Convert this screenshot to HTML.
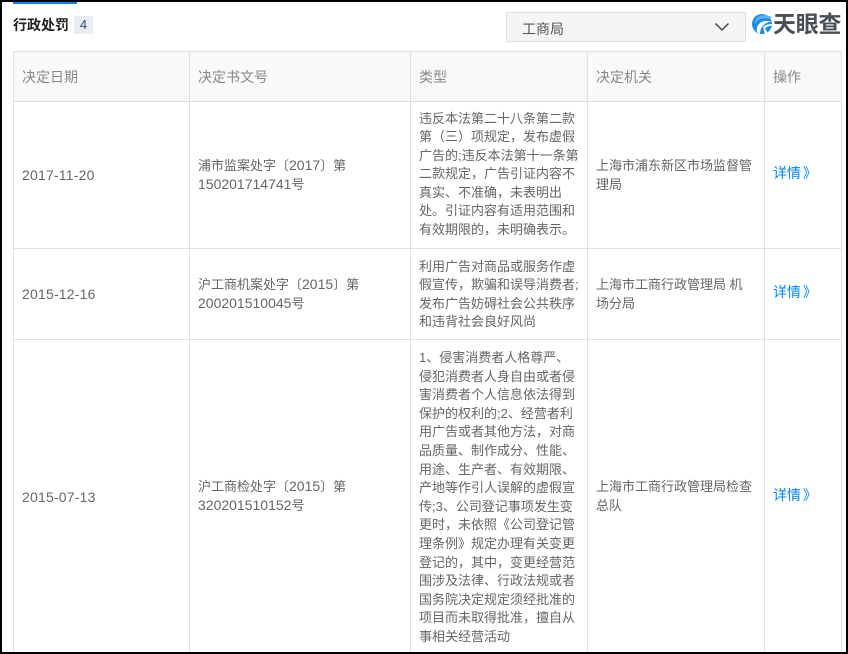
<!DOCTYPE html>
<html lang="zh">
<head>
<meta charset="utf-8">
<style>
html,body{margin:0;padding:0;background:#000;}
#p{position:relative;width:848px;height:654px;overflow:hidden;background:#000;font-family:"Liberation Sans","Noto Sans CJK SC",sans-serif;font-size:13px;color:#666;}
#w{position:absolute;left:2px;top:2px;width:844px;height:650px;background:#fff;}
.a{position:absolute;white-space:nowrap;}
.l{position:absolute;background:#e0e0e0;}
.t{line-height:18.6px;}
.b{color:#0084ff;font-size:14px;word-spacing:-2px;}
.h{color:#888;font-size:14px;}
.d{font-size:14px;letter-spacing:.2px;}
.n{font-size:14px;line-height:1;}
</style>
</head>
<body>
<div id="p">
<div id="w"></div>
<div class="a" style="left:13px;top:2px;width:64px;height:2px;background:#0084ff"></div>
<div class="a" style="left:13px;top:16px;font-size:14px;font-weight:bold;color:#222;line-height:18px">行政处罚</div>
<div class="a" style="left:74px;top:16px;width:19px;height:18px;background:#e9ecf3;color:#34507e;text-align:center;line-height:18px;font-size:13px">4</div>

<div class="a" style="left:506px;top:12px;width:238px;height:28px;background:#f5f5f5;border:1px solid #e0e0e0"></div>
<div class="a" style="left:522px;top:20px;font-size:14px;color:#555;line-height:18px">工商局</div>
<svg class="a" style="left:714px;top:21px" width="16" height="12" viewBox="0 0 16 12"><path d="M1.5 2.5L8 9L14.500 2.500" fill="none" stroke="#444" stroke-width="1.500"/></svg>

<svg class="a" style="left:751px;top:13px" width="22" height="22" viewBox="0 0 22 22">
<circle cx="11" cy="11" r="10" fill="#1f8ceb"/>
<path d="M4 11C6 6 13 4 19 6L21 4 14 2C8 2 3 6 4 11Z" fill="#5cb4f5"/>
<path d="M9 21C9 15 12 10 21 8L14 8C8 9 5 13 6 19Z" fill="#fff"/>
<path d="M12 14C14 12 17 11 21 11L20 13C17 13 15 14 14 16L17 20 14 21Z" fill="#fff"/>
</svg>
<div class="a" style="left:773px;top:12px;font-size:23px;line-height:25px;font-weight:bold;color:#4a4f55;letter-spacing:-.3px">天眼查</div>

<div class="a" style="left:14px;top:52px;width:827px;height:49px;background:#f9f9f9"></div>

<div class="l" style="left:13px;top:51px;width:829px;height:1px"></div>
<div class="l" style="left:13px;top:101px;width:829px;height:1px"></div>
<div class="l" style="left:13px;top:248px;width:829px;height:1px"></div>
<div class="l" style="left:13px;top:339px;width:829px;height:1px"></div>
<div class="l" style="left:13px;top:51px;width:1px;height:601px"></div>
<div class="l" style="left:189px;top:51px;width:1px;height:601px"></div>
<div class="l" style="left:410px;top:51px;width:1px;height:601px"></div>
<div class="l" style="left:587px;top:51px;width:1px;height:601px"></div>
<div class="l" style="left:764px;top:51px;width:1px;height:601px"></div>
<div class="l" style="left:841px;top:51px;width:1px;height:601px"></div>

<div class="a h" style="left:22px;top:68px;line-height:18px">决定日期</div>
<div class="a h" style="left:198px;top:68px;line-height:18px">决定书文号</div>
<div class="a h" style="left:419px;top:68px;line-height:18px">类型</div>
<div class="a h" style="left:596px;top:68px;line-height:18px">决定机关</div>
<div class="a h" style="left:773px;top:68px;line-height:18px">操作</div>

<div class="a d" style="left:22px;top:166px;line-height:18px">2017-11-20</div>
<div class="a t" style="left:198px;top:157px">浦市监案处字〔<span class="n">2017</span>〕第<br><span class="n">150201714741</span>号</div>
<div class="a t" style="left:419px;top:109.500px">违反本法第二十八条第二款<br>第（三）项规定，发布虚假<br>广告的;违反本法第十一条第<br>二款规定，广告引证内容不<br>真实、不准确，未表明出<br>处。引证内容有适用范围和<br>有效期限的，未明确表示。</div>
<div class="a t" style="left:596px;top:157px">上海市浦东新区市场监督管<br>理局</div>
<div class="a b" style="left:773px;top:164px;line-height:18px">详情 》</div>

<div class="a d" style="left:22px;top:285px;line-height:18px">2015-12-16</div>
<div class="a t" style="left:198px;top:276px">沪工商机案处字〔<span class="n">2015</span>〕第<br><span class="n">200201510045</span>号</div>
<div class="a t" style="left:419px;top:257.500px">利用广告对商品或服务作虚<br>假宣传，欺骗和误导消费者;<br>发布广告妨碍社会公共秩序<br>和违背社会良好风尚</div>
<div class="a t" style="left:596px;top:276px">上海市工商行政管理局 机<br>场分局</div>
<div class="a b" style="left:773px;top:283px;line-height:18px">详情 》</div>

<div class="a d" style="left:22px;top:488px;line-height:18px">2015-07-13</div>
<div class="a t" style="left:198px;top:478px">沪工商检处字〔<span class="n">2015</span>〕第<br><span class="n">320201510152</span>号</div>
<div class="a t" style="left:419px;top:349px">1、侵害消费者人格尊严、<br>侵犯消费者人身自由或者侵<br>害消费者个人信息依法得到<br>保护的权利的;2、经营者利<br>用广告或者其他方法，对商<br>品质量、制作成分、性能、<br>用途、生产者、有效期限、<br>产地等作引人误解的虚假宣<br>传;3、公司登记事项发生变<br>更时，未依照《公司登记管<br>理条例》规定办理有关变更<br>登记的，其中，变更经营范<br>围涉及法律、行政法规或者<br>国务院决定规定须经批准的<br>项目而未取得批准，擅自从<br>事相关经营活动</div>
<div class="a t" style="left:596px;top:478px">上海市工商行政管理局检查<br>总队</div>
<div class="a b" style="left:773px;top:486px;line-height:18px">详情 》</div>
</div>
</body>
</html>
